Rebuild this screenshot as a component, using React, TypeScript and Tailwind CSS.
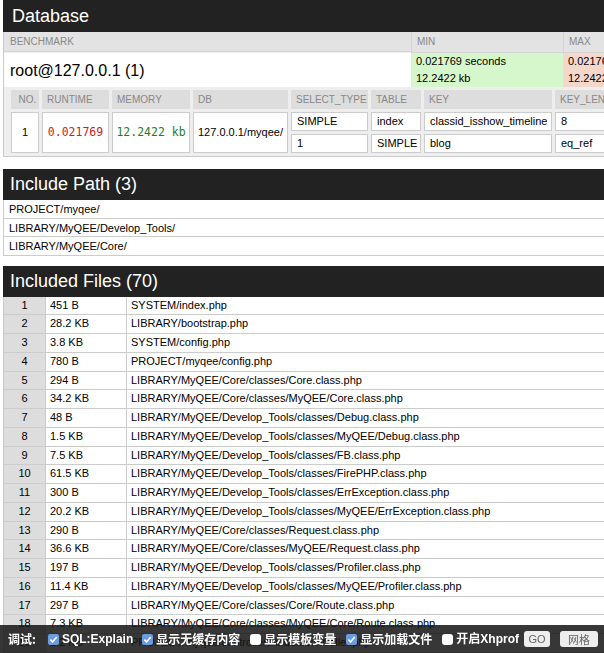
const files: [string, string][] = [
  ['451 B', 'SYSTEM/index.php'],
  ['28.2 KB', 'LIBRARY/bootstrap.php'],
  ['3.8 KB', 'SYSTEM/config.php'],
  ['780 B', 'PROJECT/myqee/config.php'],
  ['294 B', 'LIBRARY/MyQEE/Core/classes/Core.class.php'],
  ['34.2 KB', 'LIBRARY/MyQEE/Core/classes/MyQEE/Core.class.php'],
  ['48 B', 'LIBRARY/MyQEE/Develop_Tools/classes/Debug.class.php'],
  ['1.5 KB', 'LIBRARY/MyQEE/Develop_Tools/classes/MyQEE/Debug.class.php'],
  ['7.5 KB', 'LIBRARY/MyQEE/Develop_Tools/classes/FB.class.php'],
  ['61.5 KB', 'LIBRARY/MyQEE/Develop_Tools/classes/FirePHP.class.php'],
  ['300 B', 'LIBRARY/MyQEE/Develop_Tools/classes/ErrException.class.php'],
  ['20.2 KB', 'LIBRARY/MyQEE/Develop_Tools/classes/MyQEE/ErrException.class.php'],
  ['290 B', 'LIBRARY/MyQEE/Core/classes/Request.class.php'],
  ['36.6 KB', 'LIBRARY/MyQEE/Core/classes/MyQEE/Request.class.php'],
  ['197 B', 'LIBRARY/MyQEE/Develop_Tools/classes/Profiler.class.php'],
  ['11.4 KB', 'LIBRARY/MyQEE/Develop_Tools/classes/MyQEE/Profiler.class.php'],
  ['297 B', 'LIBRARY/MyQEE/Core/classes/Core/Route.class.php'],
  ['7.3 KB', 'LIBRARY/MyQEE/Core/classes/MyQEE/Core/Route.class.php'],
  ['1.2 KB', 'PROJECT/myqee/controllers/index.controller.php'],
  ['4.1 KB', 'LIBRARY/MyQEE/Core/classes/Controller.class.php'],
];

const includePaths = ['PROJECT/myqee/', 'LIBRARY/MyQEE/Develop_Tools/', 'LIBRARY/MyQEE/Core/'];

function SectionTitle({ children }: { children: string }) {
  return (
    <h2 className="h-[31px] bg-[#222] pl-[7px] text-[18px] leading-[31px] text-white">{children}</h2>
  );
}

function Check({ on }: { on: boolean }) {
  if (!on) return <span className="h-[11px] w-[11px] rounded-[3px] bg-white" />;
  return (
    <span className="flex h-[11px] w-[11px] items-center justify-center rounded-[2px] bg-[#6b9be0]">
      <svg viewBox="0 0 10 10" className="h-[9px] w-[9px]">
        <path d="M1.5 5.2 L4 7.6 L8.6 2.2" fill="none" stroke="white" strokeWidth="1.8" />
      </svg>
    </span>
  );
}

export default function App() {
  const th = 'bg-[#dddddd] pl-[5px] text-[10px] leading-[19px] text-[#888]';
  const td = 'border border-[#ccc] bg-white pl-[5px] text-[11px] leading-[17px]';
  const mono = "font-['DejaVu_Sans_Mono',monospace] text-[11.5px]";

  return (
    <div className="h-screen overflow-hidden bg-white font-['Liberation_Sans',Arial,sans-serif] text-[11px] text-black">
      <div className="w-[780px] pl-[3px]">
        {/* Database */}
        <section>
          <h2 className="h-[32px] bg-[#222] pl-[9px] text-[18px] leading-[33px] text-white">Database</h2>
          <div className="border border-t-0 border-[#ccc] bg-[#eee]">
            <div className="grid grid-cols-[407px_152px_1fr]">
              <div className="h-[20px] border-b border-[#d4d4d4] bg-[#e3e3e3] pl-[6px] text-[10px] leading-[20px] text-[#888]">BENCHMARK</div>
              <div className="border-b border-l border-[#d4d4d4] bg-[#e3e3e3] pl-[5px] text-[10px] leading-[20px] text-[#888]">MIN</div>
              <div className="border-b border-l border-[#d4d4d4] bg-[#e3e3e3] pl-[5px] text-[10px] leading-[20px] text-[#888]">MAX</div>
              <div className="h-[34px] bg-white pl-[6px] text-[16px] leading-[35px]">root@127.0.0.1 (1)</div>
              <div className="bg-[#d6f6cb] pl-[5px] leading-[17px]">
                <div>0.021769 seconds</div>
                <div>12.2422 kb</div>
              </div>
              <div className="bg-[#f5d7cc] pl-[5px] leading-[17px]">
                <div>0.021769 seconds</div>
                <div>12.2422 kb</div>
              </div>
            </div>
            <div className="grid grid-cols-[28px_67px_78px_95px_77px_50px_128px_70px] grid-rows-[19px_19px_19px] gap-[3px] px-[7px] py-[3px]">
              <div className={th + ' pl-0 text-center'}>NO.</div>
              <div className={th}>RUNTIME</div>
              <div className={th}>MEMORY</div>
              <div className={th}>DB</div>
              <div className={th}>SELECT_TYPE</div>
              <div className={th}>TABLE</div>
              <div className={th}>KEY</div>
              <div className={th}>KEY_LEN</div>

              <div className="row-span-2 flex items-center justify-center border border-[#ccc] bg-white">1</div>
              <div className={'row-span-2 flex items-center justify-center border border-[#ccc] bg-white text-[#d41a1a] ' + mono}>0.021769</div>
              <div className={'row-span-2 flex items-center justify-center border border-[#ccc] bg-white text-[#1f7d1f] ' + mono}>12.2422 kb</div>
              <div className="row-span-2 flex items-center border border-[#ccc] bg-white pl-[4px]">127.0.0.1/myqee/</div>
              <div className={td}>SIMPLE</div>
              <div className={td}>index</div>
              <div className={td}>classid_isshow_timeline</div>
              <div className={td}>8</div>
              <div className={td}>1</div>
              <div className={td}>SIMPLE</div>
              <div className={td}>blog</div>
              <div className={td}>eq_ref</div>
            </div>
          </div>
        </section>

        {/* Include Path */}
        <section className="mt-[12px]">
          <SectionTitle>Include Path (3)</SectionTitle>
          <div className="border-x border-[#ccc]">
            {includePaths.map((p) => (
              <div key={p} className="h-[18.5px] border-b border-[#ccc] pl-[5px] leading-[18px]">{p}</div>
            ))}
          </div>
        </section>

        {/* Included Files */}
        <section className="mt-[10px]">
          <SectionTitle>Included Files (70)</SectionTitle>
          <div className="border-l border-[#ccc]">
            {files.map(([size, path], i) => (
              <div key={i} className="flex h-[18.75px] border-b border-[#ccc] leading-[17px]">
                <div className="w-[41px] bg-[#dddddd] text-center">{i + 1}</div>
                <div className="w-[81px] border-l border-[#ccc] pl-[4px]">{size}</div>
                <div className="flex-1 border-l border-[#ccc] pl-[4px]">{path}</div>
              </div>
            ))}
          </div>
        </section>
      </div>

      {/* Debug toolbar */}
      <div className="fixed inset-x-0 bottom-0 flex h-[28px] items-center bg-[rgba(22,22,22,0.86)] pl-[8px] font-['Liberation_Sans','Noto_Sans_CJK_SC',sans-serif] text-[12px] font-bold text-white">
        <span className="font-['Noto_Sans_CJK_SC',sans-serif]">调试:</span>
        <label className="ml-[12px] flex items-center gap-[3px]"><Check on />SQL:Explain</label>
        <label className="ml-[9px] flex items-center gap-[3px] font-['Noto_Sans_CJK_SC',sans-serif]"><Check on />显示无缓存内容</label>
        <label className="ml-[10px] flex items-center gap-[3px] font-['Noto_Sans_CJK_SC',sans-serif]"><Check on={false} />显示模板变量</label>
        <label className="ml-[10px] flex items-center gap-[3px] font-['Noto_Sans_CJK_SC',sans-serif]"><Check on />显示加载文件</label>
        <label className="ml-[10px] flex items-center gap-[3px]"><Check on={false} />开启Xhprof</label>
        <button className="ml-[5px] h-[16px] w-[26px] rounded-[3px] bg-[#eee] text-[11px] font-normal text-[#666]">GO</button>
        <button className="ml-[10px] h-[16px] w-[38px] rounded-[3px] bg-[#eee] font-['Noto_Sans_CJK_SC',sans-serif] text-[11px] font-normal text-[#666]">网格</button>
      </div>
    </div>
  );
}
